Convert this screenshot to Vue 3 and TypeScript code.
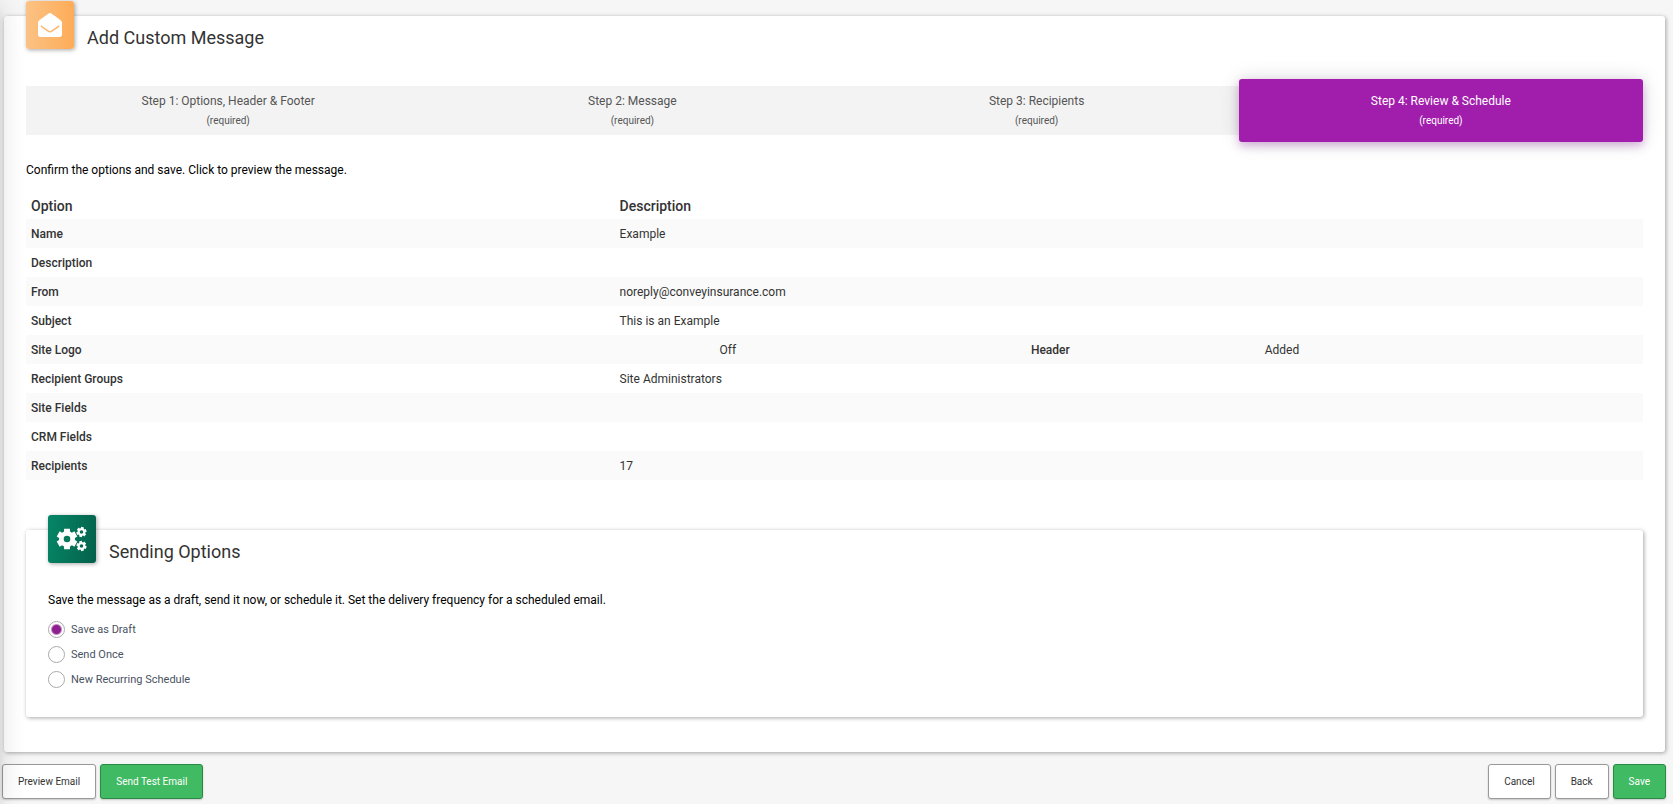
<script setup lang="ts">
import { ref } from 'vue'

interface Step { title: string; active?: boolean }
interface Row { label: string; value: string; header?: string }

const steps: Step[] = [
  { title: 'Step 1: Options, Header & Footer' },
  { title: 'Step 2: Message' },
  { title: 'Step 3: Recipients' },
  { title: 'Step 4: Review & Schedule', active: true },
]

const rows: Row[] = [
  { label: 'Name', value: 'Example' },
  { label: 'Description', value: '' },
  { label: 'From', value: 'noreply@conveyinsurance.com' },
  { label: 'Subject', value: 'This is an Example' },
  { label: 'Site Logo', value: 'Off', header: 'Added' },
  { label: 'Recipient Groups', value: 'Site Administrators' },
  { label: 'Site Fields', value: '' },
  { label: 'CRM Fields', value: '' },
  { label: 'Recipients', value: '17' },
]

const sendOptions = ['Save as Draft', 'Send Once', 'New Recurring Schedule']
const selected = ref(sendOptions[0])

// Closed outline of a gear with six teeth and a round hole
function gear(cx: number, cy: number, outer: number, body: number, hole: number, turn: number): string {
  const points: string[] = []
  const at = (radius: number, degrees: number) => {
    const a = (degrees * Math.PI) / 180
    return `${(cx + radius * Math.cos(a)).toFixed(2)} ${(cy + radius * Math.sin(a)).toFixed(2)}`
  }
  for (let i = 0; i < 6; i++) {
    const mid = i * 60 - 90 + turn
    points.push(at(body, mid - 22), at(outer, mid - 16), at(outer, mid + 16), at(body, mid + 22))
  }
  return `M${points.join('L')}Z M${cx - hole} ${cy}a${hole} ${hole} 0 1 0 ${hole * 2} 0a${hole} ${hole} 0 1 0 ${-hole * 2} 0Z`
}

const gears = [
  gear(10, 12, 10.6, 8, 3.3, 0),
  gear(24.5, 5, 5.2, 3.9, 1.8, 12),
  gear(24.5, 19, 5.2, 3.9, 1.8, -12),
]
</script>

<template>
  <div class="page">
    <main class="card">
      <header class="card-head">
        <span class="badge badge-orange">
          <svg class="envelope" viewBox="0 0 512 512" aria-hidden="true">
            <path d="M512 464c0 26.51-21.49 48-48 48H48c-26.51 0-48-21.49-48-48V200.724a48 48 0 0 1 18.387-37.776c24.913-19.529 45.501-35.365 164.2-121.511C199.412 29.17 232.797-.347 256 .003c23.198-.354 56.596 29.172 73.413 41.433 118.687 86.137 139.303 101.995 164.2 121.512A48 48 0 0 1 512 200.724V464zm-65.666-196.605c-2.563-3.728-7.7-4.595-11.339-1.907-22.845 16.873-55.462 40.705-105.582 77.079-16.825 12.266-50.21 41.781-73.413 41.43-23.211.344-56.559-29.143-73.413-41.43-50.114-36.37-82.734-60.204-105.582-77.079-3.639-2.688-8.776-1.821-11.339 1.907l-9.072 13.196a7.998 7.998 0 0 0 1.839 10.967c22.887 16.899 55.454 40.69 105.303 76.868 20.274 14.781 56.524 47.813 92.264 47.573 35.724.242 71.961-32.771 92.263-47.573 49.85-36.179 82.418-59.97 105.303-76.868a7.998 7.998 0 0 0 1.839-10.967l-9.071-13.196z" />
          </svg>
        </span>
        <h1>Add Custom Message</h1>
      </header>

      <nav class="steps" aria-label="Steps">
        <a v-for="s in steps" :key="s.title" href="#" class="step" :class="{ active: s.active }">
          <span>{{ s.title }}</span>
          <small>(required)</small>
        </a>
      </nav>

      <p class="note">Confirm the options and save. Click to preview the message.</p>

      <table>
        <colgroup>
          <col class="c-label" /><col class="c-value" /><col class="c-mid" /><col />
        </colgroup>
        <thead>
          <tr><th scope="col">Option</th><th scope="col" colspan="3">Description</th></tr>
        </thead>
        <tbody>
          <tr v-for="r in rows" :key="r.label">
            <th scope="row">{{ r.label }}</th>
            <template v-if="r.header">
              <td class="center">{{ r.value }}</td>
              <th class="center">Header</th>
              <td>{{ r.header }}</td>
            </template>
            <td v-else colspan="3">{{ r.value }}</td>
          </tr>
        </tbody>
      </table>

      <section class="card inner">
        <header class="card-head">
          <span class="badge badge-green">
            <svg class="gears" viewBox="0 0 30 24" aria-hidden="true">
              <path v-for="g in gears" :key="g" :d="g" />
            </svg>
          </span>
          <h2>Sending Options</h2>
        </header>
        <p class="note">Save the message as a draft, send it now, or schedule it. Set the delivery frequency for a scheduled email.</p>
        <div class="radios" role="radiogroup" aria-label="Sending Options">
          <label v-for="o in sendOptions" :key="o">
            <input v-model="selected" type="radio" name="sending" :value="o" />
            <span>{{ o }}</span>
          </label>
        </div>
      </section>
    </main>

    <footer>
      <button type="button">Preview Email</button>
      <button type="button" class="green">Send Test Email</button>
      <span class="spacer"></span>
      <button type="button">Cancel</button>
      <button type="button">Back</button>
      <button type="button" class="green">Save</button>
    </footer>
  </div>
</template>

<style>
body {
  background: #f6f6f6;
}
</style>

<style scoped>
.page {
  position: relative;
  box-sizing: border-box;
  min-height: 100vh;
  padding: 16px 0 3px;
  overflow: hidden;
  background: #f6f6f6;
  font-family: Roboto, "Liberation Sans", sans-serif;
  font-size: 12px;
  color: #333;
}
/* Shade cast along the left edge */
.page::before {
  content: "";
  position: absolute;
  z-index: 1;
  top: 0;
  bottom: 0;
  right: 100%;
  width: 100px;
  pointer-events: none;
  box-shadow: 0 8px 10px -5px rgba(0, 0, 0, 0.2), 0 4px 25px rgba(0, 0, 0, 0.14);
}
.card {
  margin: 0 8px 0 4px;
  padding: 0 22px 35px;
  background: #fff;
  border-radius: 3px;
  box-shadow: 1px 1px 4px rgba(0, 0, 0, 0.35);
}
.card.inner {
  margin: 50px 0 0;
  padding-bottom: 25px;
}
.card-head {
  display: flex;
  align-items: flex-start;
  gap: 13px;
  height: 63px;
}
.inner .card-head {
  height: 60px;
}
.badge {
  display: flex;
  align-items: center;
  justify-content: center;
  width: 48px;
  height: 48px;
  margin-top: -15px;
  border-radius: 3px;
  box-shadow: 1px 1px 4px rgba(0, 0, 0, 0.35);
}
.badge svg {
  fill: #fff;
  fill-rule: evenodd;
  overflow: visible;
}
.badge-orange {
  background: linear-gradient(to right, #fbc284, #fdac57);
}
.badge-green {
  background: linear-gradient(100deg, #068767, #04604a);
}
.envelope {
  width: 24px;
  height: 24px;
}
.gears {
  width: 30px;
  height: 24px;
}
h1,
h2 {
  margin: 10px 0 0;
  font-size: 18px;
  line-height: 24px;
  font-weight: 400;
}
.steps {
  display: flex;
  align-items: center;
  height: 63px;
}
.step {
  flex: 1;
  display: flex;
  flex-direction: column;
  align-items: center;
  justify-content: center;
  height: 49px;
  background: #f3f3f3;
  color: #555;
  text-decoration: none;
  line-height: 20px;
}
.step small {
  font-size: 10px;
}
.step.active {
  height: 63px;
  background: #a11eac;
  color: #fff;
  border-radius: 3px;
  box-shadow: 0 0 20px rgba(0, 0, 0, 0.14), 0 4px 8px rgba(156, 39, 176, 0.3);
}
.note {
  margin: 18px 0 11px;
  line-height: 21px;
  color: #000;
}
table {
  width: 100%;
  table-layout: fixed;
  border-collapse: collapse;
}
.c-label {
  width: 36.4%;
}
.c-value {
  width: 14%;
}
.c-mid {
  width: 25.9%;
}
th,
td {
  height: 29px;
  box-sizing: border-box;
  padding: 0 5px;
  line-height: 20px;
  text-align: left;
}
th {
  font-weight: 500;
}
thead th {
  height: 27px;
  font-size: 14px;
}
.center {
  text-align: center;
}
tbody tr:nth-child(odd) {
  background: #fafafa;
}
.inner .note {
  margin: 0 0 6px;
}
.radios {
  display: flex;
  flex-direction: column;
}
.radios label {
  display: flex;
  align-items: center;
  gap: 6px;
  height: 25px;
  font-size: 11px;
  color: #49535f;
}
input {
  appearance: none;
  width: 17px;
  height: 17px;
  margin: 0;
  border: 1px solid #aaa;
  border-radius: 50%;
  background: #fff;
}
input:checked {
  background: radial-gradient(circle, #8e1f8f 4px, #fff 6px);
}
footer {
  display: flex;
  gap: 4px;
  margin: 12px 7px 0 2px;
}
.spacer {
  flex: 1;
}
button {
  height: 35px;
  padding: 0 15px;
  border: 1px solid #999;
  border-radius: 3px;
  background: #fff;
  color: #333;
  font: 10px/20px Roboto, "Liberation Sans", sans-serif;
  box-shadow: 0 1px 2px rgba(0, 0, 0, 0.2);
}
button.green {
  border-color: #2a8a45;
  background: #40ba63;
  color: #fff;
}
</style>
